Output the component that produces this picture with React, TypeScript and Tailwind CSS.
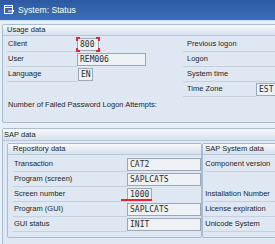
import React from "react";

const mono = "font-['DejaVu_Sans_Mono','Liberation_Mono',monospace] text-[8px] text-[#2a2a2a]";

export default function App() {
  return (
    <div className="relative w-[275px] h-[244px] overflow-hidden bg-[#e9eff6] font-['Liberation_Sans',Arial,sans-serif] text-[7.5px] leading-none text-[#1e1e1e]">
      {/* Title bar */}
      <div className="h-[20px] bg-gradient-to-b from-[#2a5aa2] to-[#3d6fb8] flex items-center pl-[4px] gap-[3px] text-white text-[8.6px]">
        <svg width="11" height="10" viewBox="0 0 11 10" fill="none" stroke="white" strokeWidth="1">
          <rect x="0.5" y="0.5" width="8" height="8" />
          <line x1="0.5" y1="2.5" x2="8.5" y2="2.5" />
          <path d="M4 6 H10 M8 4 L10 6 L8 8" />
        </svg>
        <span>System: Status</span>
      </div>
      <div className="h-px bg-[#cfdbea]" />

      <div className="pt-[3px] pl-[2px]">
        {/* Usage data */}
        <div className="w-[290px] h-[99px] border border-[#a7bbd1] rounded-[2px] bg-[#dfe8f2]">
          <div className="h-[11px] bg-gradient-to-b from-[#f7f9fc] to-[#d6e1ed] border-b border-[#b7c7d9] flex items-center pl-[4px]">
            Usage data
          </div>
          <div className="flex pt-px pl-[4px]">
            {/* left column */}
            <div className="w-[176px] flex flex-col">
              <div className="flex h-[15px]">
                <div className="w-[70px] h-full border-b border-[#c3d1e0] flex items-center pl-px">Client</div>
                <div className={`relative w-[22px] h-[13px] mt-px border border-[#9aa8b8] bg-[#eef2f6] flex items-center pl-[2px] ${mono}`}>
                  800
                  <div className="absolute -left-[2px] -top-[2px] w-[4px] h-[4px] border-t-2 border-l-2 border-[#e3262a]" />
                  <div className="absolute -right-[2px] -top-[2px] w-[4px] h-[4px] border-t-2 border-r-2 border-[#e3262a]" />
                  <div className="absolute -left-[2px] -bottom-[2px] w-[4px] h-[4px] border-b-2 border-l-2 border-[#e3262a]" />
                  <div className="absolute -right-[2px] -bottom-[2px] w-[4px] h-[4px] border-b-2 border-r-2 border-[#e3262a]" />
                </div>
              </div>
              <div className="flex h-[15px]">
                <div className="w-[70px] h-full border-b border-[#c3d1e0] flex items-center pl-px">User</div>
                <div className={`w-[69px] h-[13px] mt-px border border-[#9aa8b8] bg-[#eef2f6] flex items-center pl-[2px] ${mono}`}>REM006</div>
              </div>
              <div className="flex h-[15px]">
                <div className="w-[71px] h-full border-b border-[#c3d1e0] flex items-center pl-px">Language</div>
                <div className={`w-[15px] h-[13px] mt-px border border-[#9aa8b8] bg-[#eef2f6] flex items-center pl-[2px] ${mono}`}>EN</div>
              </div>
              <div className="h-[15px]" />
              <div className="h-[15px] flex items-center pl-px">Number of Failed Password Logon Attempts:</div>
            </div>
            {/* right column */}
            <div className="flex-1 flex flex-col">
              <div className="h-[15px] border-b border-[#c3d1e0] flex items-center pl-[4px]">Previous logon</div>
              <div className="h-[15px] border-b border-[#c3d1e0] flex items-center pl-[4px]">Logon</div>
              <div className="h-[15px] border-b border-[#c3d1e0] flex items-center pl-[4px]">System time</div>
              <div className="flex h-[15px]">
                <div className="w-[73px] h-full border-b border-[#c3d1e0] flex items-center pl-[4px]">Time Zone</div>
                <div className={`w-[24px] h-[13px] mt-px border border-[#9aa8b8] bg-[#eef2f6] flex items-center pl-[2px] ${mono}`}>EST</div>
              </div>
            </div>
          </div>
        </div>

        {/* SAP data */}
        <div className="mt-[5px] w-[290px] h-[130px] border border-[#a7bbd1] rounded-[2px] bg-[#dfe8f2]">
          <div className="h-[12px] bg-gradient-to-b from-[#f7f9fc] to-[#d6e1ed] border-b border-[#b7c7d9] flex items-center pl-px">
            SAP data
          </div>
          <div className="flex pt-[2px] pl-[4px]">
            {/* Repository data */}
            <div className="w-[198px] border border-[#a7bbd1] rounded-[2px] bg-[#dfe8f2] pb-[5px]">
              <div className="h-[11px] bg-gradient-to-b from-[#f7f9fc] to-[#d6e1ed] border-b border-[#b7c7d9] flex items-center pl-[5px]">
                Repository data
              </div>
              <div className="pt-[2px] pl-[5px] flex flex-col">
                <div className="flex h-[15px]">
                  <div className="w-[114px] h-full border-b border-[#c3d1e0] flex items-center pl-px">Transaction</div>
                  <div className={`w-[74px] h-[13px] mt-px border border-[#9aa8b8] bg-[#eef2f6] flex items-center pl-[2px] ${mono}`}>CAT2</div>
                </div>
                <div className="flex h-[15px]">
                  <div className="w-[114px] h-full border-b border-[#c3d1e0] flex items-center pl-px">Program (screen)</div>
                  <div className={`w-[74px] h-[13px] mt-px border border-[#9aa8b8] bg-[#eef2f6] flex items-center pl-[2px] ${mono}`}>SAPLCATS</div>
                </div>
                <div className="flex h-[15px]">
                  <div className="w-[114px] h-full border-b border-[#c3d1e0] flex items-center pl-px">Screen number</div>
                  <div className={`w-[25px] h-[13px] mt-px border border-[#9aa8b8] bg-[#eef2f6] flex items-center pl-[2px] ${mono}`}>1000</div>
                </div>
                <div className="flex h-[15px]">
                  <div className="w-[114px] h-full border-b border-[#c3d1e0] flex items-center pl-px">Program (GUI)</div>
                  <div className={`w-[74px] h-[13px] mt-px border border-[#9aa8b8] bg-[#eef2f6] flex items-center pl-[2px] ${mono}`}>SAPLCATS</div>
                </div>
                <div className="flex h-[15px]">
                  <div className="w-[114px] h-full border-b border-[#c3d1e0] flex items-center pl-px">GUI status</div>
                  <div className={`w-[74px] h-[13px] mt-px border border-[#9aa8b8] bg-[#eef2f6] flex items-center pl-[2px] ${mono}`}>INIT</div>
                </div>
              </div>
            </div>
            {/* SAP System data */}
            <div className="w-[90px] border border-[#a7bbd1] rounded-[2px] bg-[#dfe8f2] pb-[5px]">
              <div className="h-[11px] bg-gradient-to-b from-[#f7f9fc] to-[#d6e1ed] border-b border-[#b7c7d9] flex items-center pl-[2px]">
                SAP System data
              </div>
              <div className="pt-[2px] pl-px flex flex-col">
                <div className="h-[15px] border-b border-[#c3d1e0] flex items-center pl-[1px]">Component version</div>
                <div className="h-[15px]" />
                <div className="h-[15px] border-b border-[#c3d1e0] flex items-center pl-[1px]">Installation Number</div>
                <div className="h-[15px] border-b border-[#c3d1e0] flex items-center pl-[1px]">License expiration</div>
                <div className="h-[15px] border-b border-[#c3d1e0] flex items-center pl-[1px]">Unicode System</div>
              </div>
            </div>
          </div>
        </div>
      </div>

      {/* red underline annotation */}
      <div className="absolute left-[121px] top-[199px] w-[31px] h-[2px] bg-[#e3262a]" />
    </div>
  );
}
